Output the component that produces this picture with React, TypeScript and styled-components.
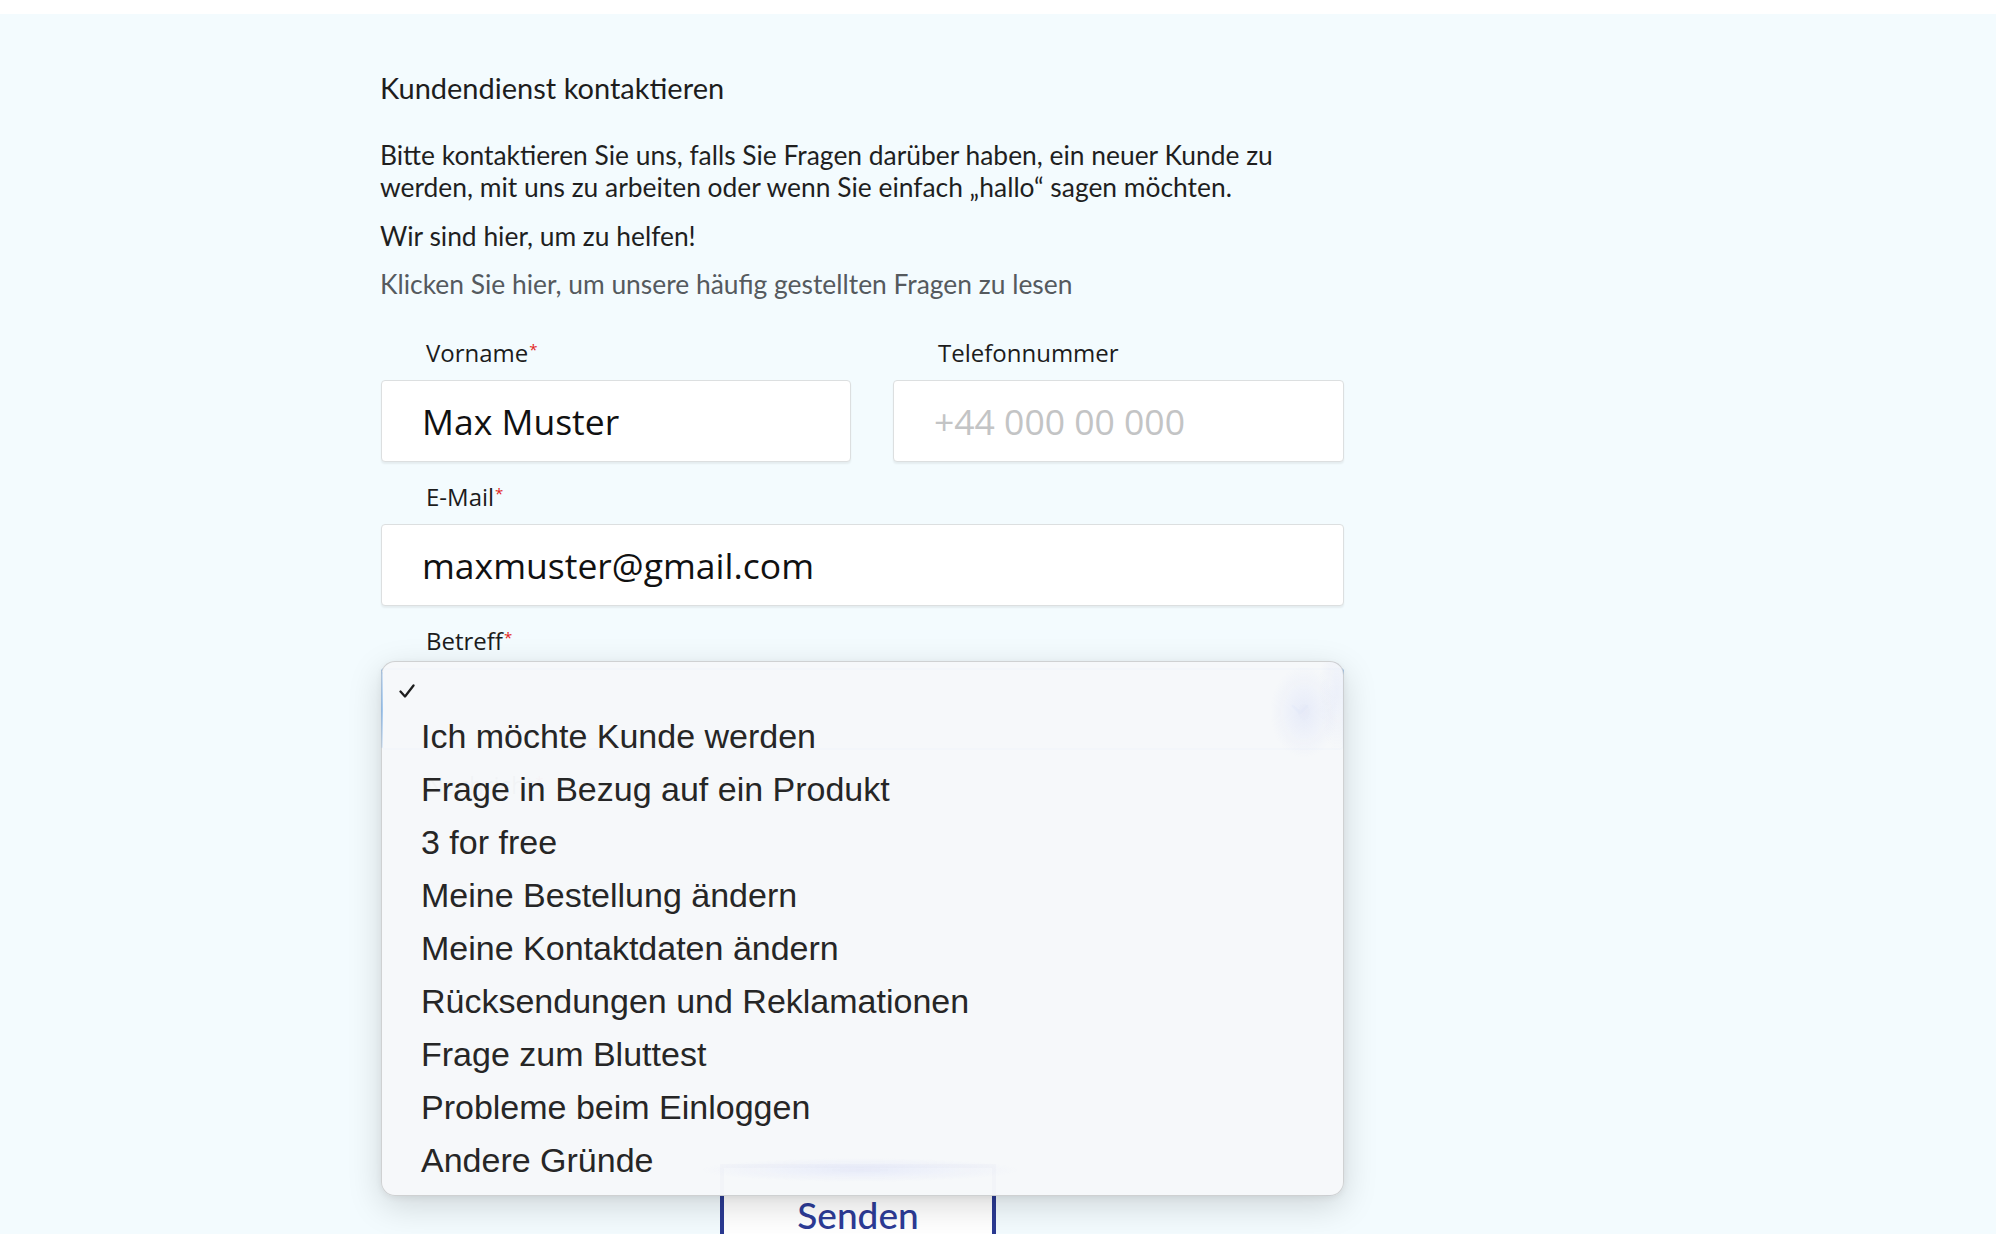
import React from "react";
import styled, { createGlobalStyle } from "styled-components";

const GlobalStyle = createGlobalStyle`
  html, body {
    margin: 0;
    padding: 0;
    background: #ffffff;
    overflow: hidden;
  }
  * { box-sizing: border-box; }
`;

const Main = styled.main`
  margin-top: 14px;
  margin-right: 3px;
  min-height: calc(100vh - 14px);
  background: #f3fbfe;
  padding: 58px 0 0 380px;
`;

const Column = styled.div`
  width: 964px;
  display: flex;
  flex-direction: column;
`;

const Title = styled.h1`
  margin: 0;
  font-family: Lato, "Open Sans", sans-serif;
  font-weight: 400;
  font-size: 29px;
  line-height: 32px;
  color: #1d1d1d;
`;

const Intro = styled.p<{ $muted?: boolean; $gap: number }>`
  margin: ${(p) => p.$gap}px 0 0;
  font-family: Lato, "Open Sans", sans-serif;
  font-weight: 400;
  font-size: 26.4px;
  line-height: 32px;
  white-space: nowrap;
  color: ${(p) => (p.$muted ? "#555a5e" : "#1f1f1f")};
`;

const Fields = styled.div`
  display: grid;
  grid-template-columns: 470px 451px;
  column-gap: 42px;
  row-gap: 19px;
  margin-top: 37px;
  padding-left: 1px;
`;

const Field = styled.div<{ $wide?: boolean }>`
  position: relative;
  display: flex;
  flex-direction: column;
  gap: 11px;
  grid-column: ${(p) => (p.$wide ? "1 / -1" : "auto")};
`;

const Label = styled.label`
  height: 32px;
  padding-left: 45px;
  font-family: "Open Sans", sans-serif;
  font-weight: 400;
  font-size: 24px;
  line-height: 32px;
  color: #1c1c1c;
`;

const Required = styled.span`
  position: relative;
  top: -7px;
  margin-left: 1px;
  line-height: 0;
  font-size: 15px;
  color: #e2231a;
`;

const TextInput = styled.input`
  height: 82px;
  width: 100%;
  border: 1px solid #dcdfe0;
  border-radius: 4px;
  background: #ffffff;
  box-shadow: 0 2px 2px rgba(0, 0, 0, 0.06);
  padding: 0 0 0 40px;
  font-family: "Open Sans", sans-serif;
  font-weight: 400;
  font-size: 35.5px;
  color: #111111;
  outline: none;
  &::placeholder {
    color: #c3c4c5;
  }
`;

const SelectBox = styled.div`
  height: 82px;
  border: 2px solid #6ea9e4;
  border-radius: 4px;
  background: #ffffff;
  display: flex;
  align-items: center;
  justify-content: flex-end;
  padding-right: 30px;
`;

const TextArea = styled.div`
  height: 304px;
  border: 1px solid #dcdfe0;
  border-radius: 4px;
  background: #ffffff;
`;

const Actions = styled.div`
  display: flex;
  justify-content: center;
  margin-top: 48px;
  padding-right: 8px;
`;

const SubmitButton = styled.button`
  width: 276px;
  height: 100px;
  border: 4px solid #2b3a92;
  background: #ffffff;
  font-family: Lato, "Open Sans", sans-serif;
  font-weight: 500;
  font-size: 37px;
  color: #2d3b96;
  cursor: pointer;
`;

const Popup = styled.div`
  position: absolute;
  z-index: 10;
  top: 36px;
  left: 0;
  width: 963px;
  padding: 6px 0 8px;
  border: 1px solid rgba(0, 0, 0, 0.16);
  border-radius: 14px;
  background:
    radial-gradient(ellipse 34px 46px at 922px 50px, rgba(120, 140, 235, 0.12), rgba(120, 140, 235, 0) 100%),
    radial-gradient(ellipse 18px 60px at 955px 30px, rgba(120, 140, 235, 0.08), rgba(120, 140, 235, 0) 100%),
    radial-gradient(ellipse 160px 12px at 478px 508px, rgba(125, 140, 240, 0.12), rgba(125, 140, 240, 0) 100%),
    rgba(246, 248, 250, 0.98);
  box-shadow: 0 10px 34px rgba(0, 0, 0, 0.15), 0 2px 6px rgba(0, 0, 0, 0.06);

  &::before {
    content: "";
    position: absolute;
    left: -1px;
    top: 10px;
    width: 2px;
    height: 76px;
    border-radius: 1px;
    background: linear-gradient(rgba(110, 169, 228, 0.25), rgba(110, 169, 228, 0.6), rgba(110, 169, 228, 0.15));
  }
`;

const CheckRow = styled.div`
  height: 42px;
  display: flex;
  align-items: center;
  padding-left: 17px;
  padding-top: 3px;
`;

const Option = styled.div`
  height: 53px;
  display: flex;
  align-items: center;
  padding-left: 39px;
  font-family: "Liberation Sans", Arial, sans-serif;
  font-weight: 400;
  font-size: 34px;
  color: #262626;
  white-space: nowrap;
`;

const options = [
  "Ich möchte Kunde werden",
  "Frage in Bezug auf ein Produkt",
  "3 for free",
  "Meine Bestellung ändern",
  "Meine Kontaktdaten ändern",
  "Rücksendungen und Reklamationen",
  "Frage zum Bluttest",
  "Probleme beim Einloggen",
  "Andere Gründe",
];

export default function App() {
  return (
    <>
      <GlobalStyle />
      <Main>
        <Column>
          <Title>Kundendienst kontaktieren</Title>
          <Intro $gap={35}>
            Bitte kontaktieren Sie uns, falls Sie Fragen darüber haben, ein neuer Kunde zu
            <br />
            werden, mit uns zu arbeiten oder wenn Sie einfach „hallo“ sagen möchten.
          </Intro>
          <Intro $gap={17}>Wir sind hier, um zu helfen!</Intro>
          <Intro $gap={16} $muted>
            Klicken Sie hier, um unsere häufig gestellten Fragen zu lesen
          </Intro>

          <Fields>
            <Field>
              <Label>
                Vorname<Required>*</Required>
              </Label>
              <TextInput defaultValue="Max Muster" />
            </Field>
            <Field>
              <Label>Telefonnummer</Label>
              <TextInput placeholder="+44 000 00 000" />
            </Field>
            <Field $wide>
              <Label>
                E-Mail<Required>*</Required>
              </Label>
              <TextInput defaultValue="maxmuster@gmail.com" />
            </Field>
            <Field $wide>
              <Label>
                Betreff<Required>*</Required>
              </Label>
              <SelectBox>
                <svg width="24" height="24" viewBox="0 0 24 24" fill="none">
                  <path d="M5 9l7 7 7-7" stroke="#3f7fd6" strokeWidth="3" strokeLinecap="round" strokeLinejoin="round" />
                </svg>
              </SelectBox>
              <Popup>
                <CheckRow>
                  <svg width="16" height="14" viewBox="0 0 16 14" fill="none">
                    <path d="M1.5 7.5l4.5 5 8.5-11" stroke="#1e1e1e" strokeWidth="2.3" strokeLinecap="round" strokeLinejoin="round" />
                  </svg>
                </CheckRow>
                {options.map((o) => (
                  <Option key={o}>{o}</Option>
                ))}
              </Popup>
            </Field>
            <Field $wide>
              <Label>
                Nachricht<Required>*</Required>
              </Label>
              <TextArea />
            </Field>
          </Fields>

          <Actions>
            <SubmitButton>Senden</SubmitButton>
          </Actions>
        </Column>
      </Main>
    </>
  );
}
